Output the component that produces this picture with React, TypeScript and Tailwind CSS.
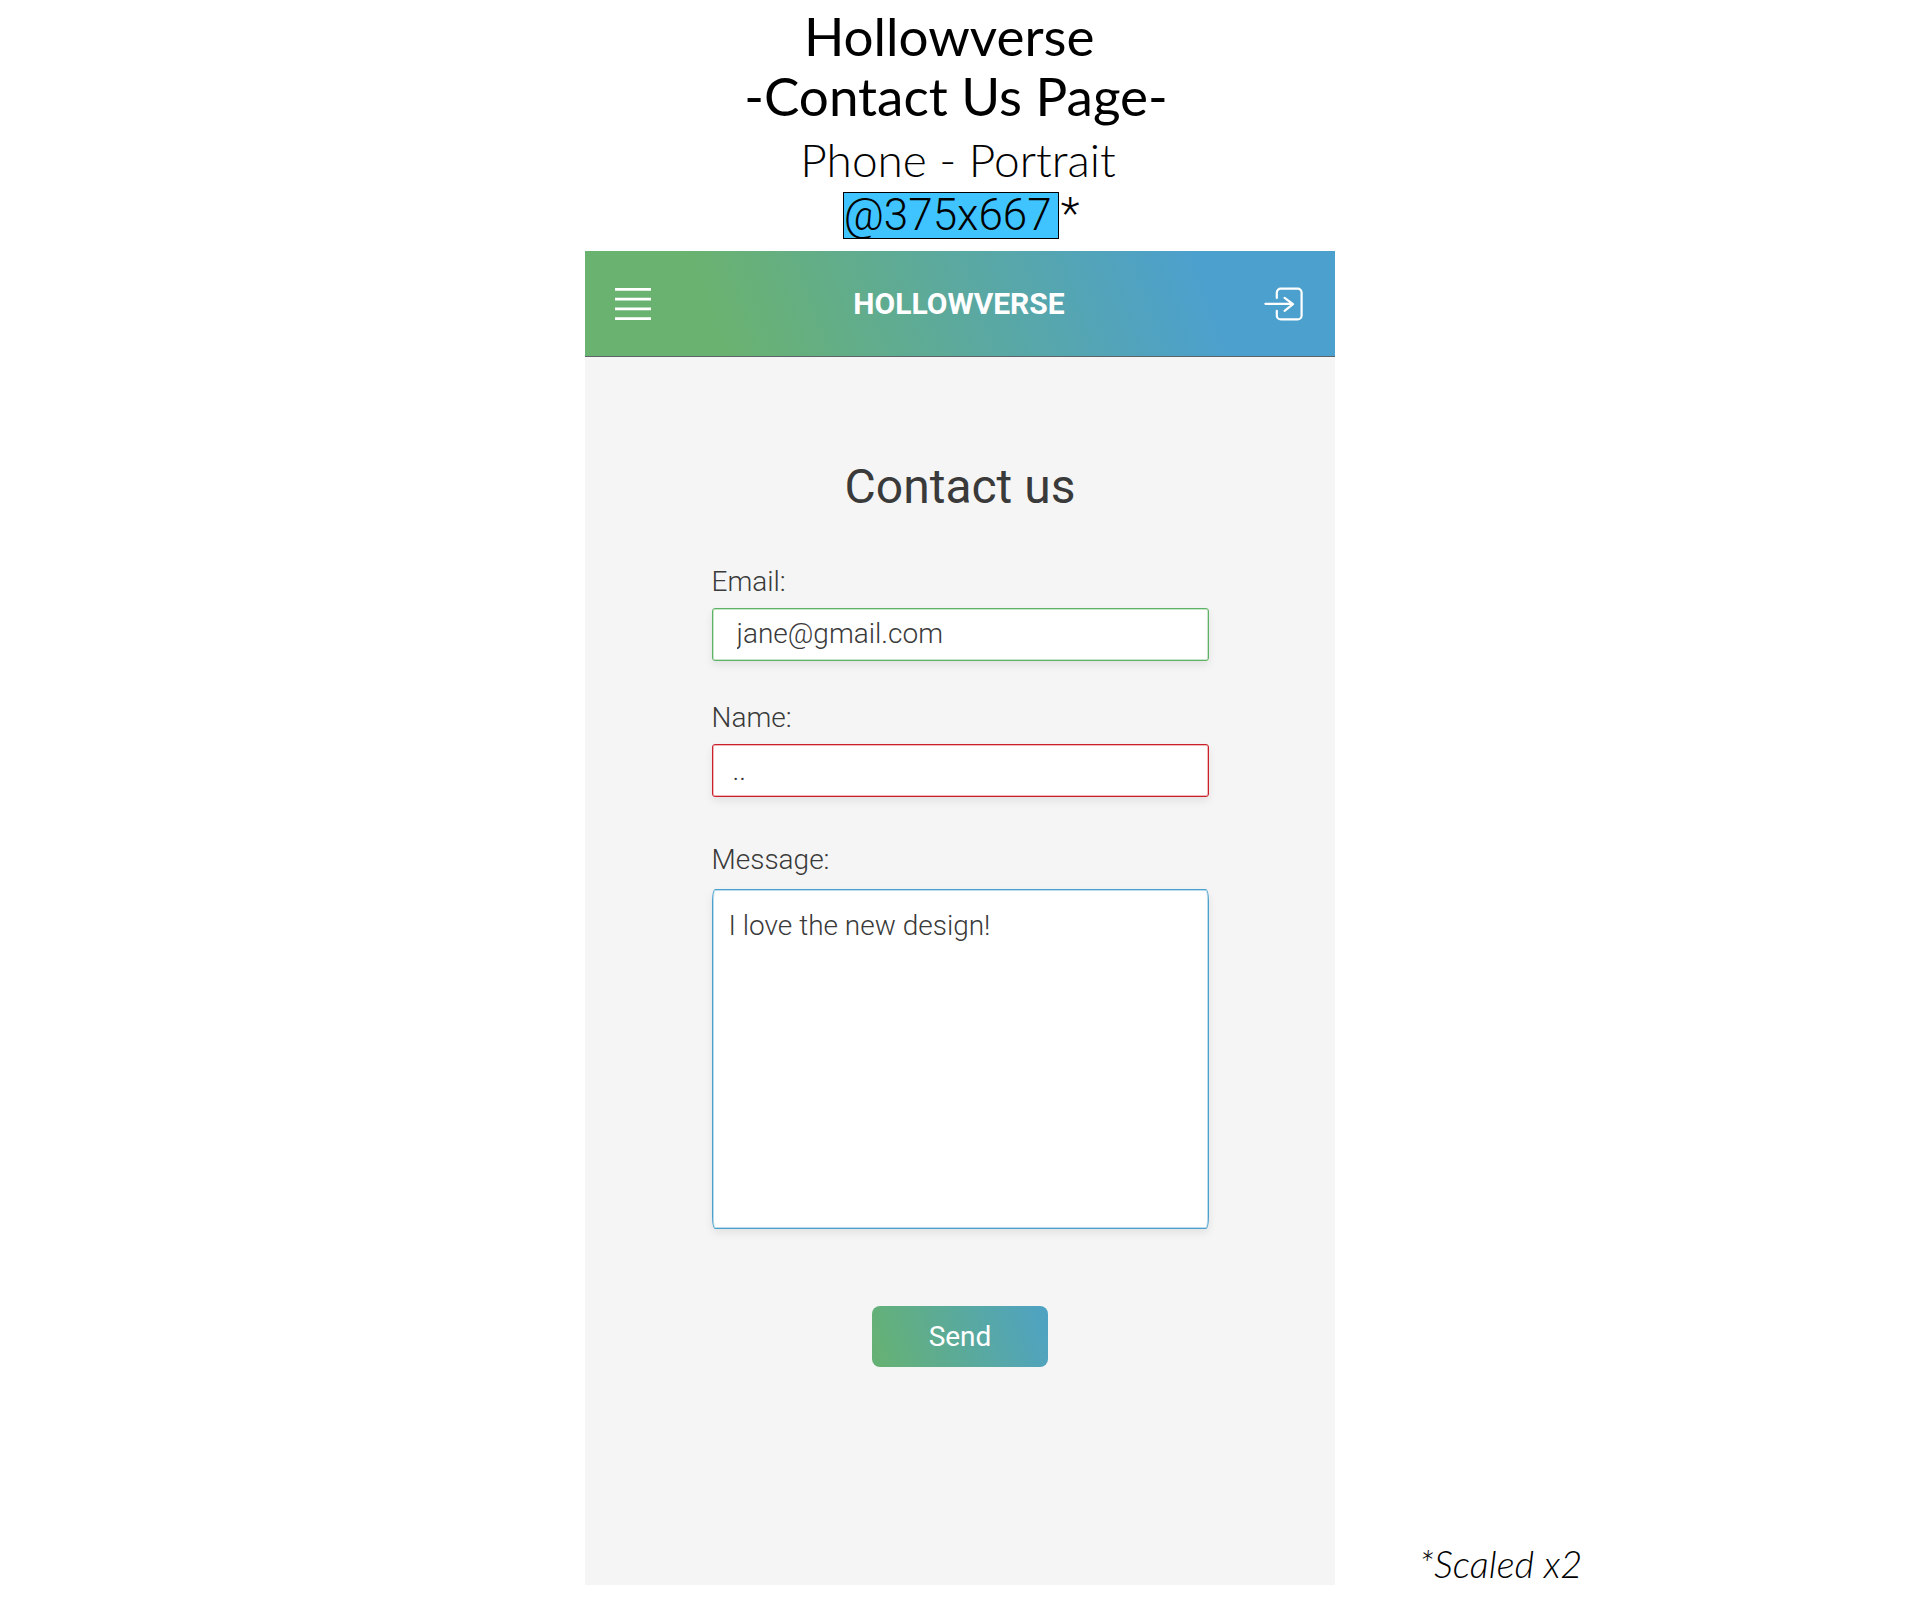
import type { ReactNode } from "react";

function MenuIcon() {
  return (
    <svg width="36" height="32" viewBox="0 0 36 32" stroke="currentColor" strokeWidth="2.6" aria-hidden="true">
      <path d="M0 1.4h36M0 11.1h36M0 20.9h36M0 30.6h36" />
    </svg>
  );
}

function LoginIcon() {
  return (
    <svg
      width="40"
      height="34"
      viewBox="1 0 40 34"
      fill="none"
      stroke="currentColor"
      strokeWidth="2.2"
      strokeLinecap="round"
      strokeLinejoin="round"
      className="overflow-visible"
      aria-hidden="true"
    >
      <path d="M12.8 11V5.6a4 4 0 0 1 4-4h16.8a4 4 0 0 1 4 4v22.8a4 4 0 0 1-4 4H16.8a4 4 0 0 1-4-4v-4.6" />
      <path d="M1.4 16.8h27M20.6 10.8l8.4 6.4-8.4 6.6" />
    </svg>
  );
}

function Field({ id, label, children }: { id: string; label: string; children: ReactNode }) {
  return (
    <div className="flex flex-col gap-[10px]">
      <label htmlFor={id} className="text-[28px] leading-8 font-light">
        {label}
      </label>
      {children}
    </div>
  );
}

export default function App() {
  return (
    <div className="min-h-screen bg-white pt-[6px] font-['Roboto',sans-serif] text-[#3a3a3a]">
      <div className="text-center font-['Lato',sans-serif] text-black">
        <h1 className="pr-2 text-[53px] leading-[60px] whitespace-pre-wrap">
          {"Hollowverse \n-Contact Us Page-"}
        </h1>
        <p className="mt-2 pr-1 text-[46px] leading-[52px] font-light">Phone - Portrait</p>
        <p className="mt-[6px] flex justify-center pl-[2px] font-['Roboto',sans-serif] text-[44px] leading-[45px] font-light">
          <span className="border border-black bg-[#40c4ff] pr-[6px]">@375x667</span>
          <span className="pl-[2px]">*</span>
        </p>
      </div>

      <div className="mt-3 grid grid-cols-[1fr_minmax(0,750px)_1fr]">
        <main className="col-start-2 bg-[#f5f5f5] pb-[218px]">
          <header className="flex h-[106px] items-center justify-between border-b border-[#5f6468] bg-[linear-gradient(71deg,#6ab270_18%,#4ca0cd_82%)] px-[30px] text-white">
            <button type="button" aria-label="Menu" className="pr-[2px]">
              <MenuIcon />
            </button>
            <span className="text-[30px] leading-9 font-bold">HOLLOWVERSE</span>
            <button type="button" aria-label="Log in">
              <LoginIcon />
            </button>
          </header>

          <form className="mx-auto flex max-w-[497px] flex-col pt-[102px]">
            <h2 className="text-center text-[48px] leading-[56px]">Contact us</h2>
            <div className="mt-[51px] flex flex-col gap-[41px]">
              <Field id="email" label="Email:">
                <input
                  id="email"
                  type="email"
                  defaultValue="jane@gmail.com"
                  className="h-[53px] w-full rounded-[3px] border border-[#5db365] bg-white px-6 pb-[2px] text-[28px] font-light shadow-[inset_0_0_0_1px_#c8e5ca,0_4px_8px_rgba(0,0,0,0.08)] outline-none"
                />
              </Field>
              <Field id="name" label="Name:">
                <input
                  id="name"
                  type="text"
                  defaultValue=".."
                  className="h-[53px] w-full rounded-[3px] border border-[#c9202a] bg-white px-5 text-[28px] font-light shadow-[inset_0_0_0_1px_#f0b6b8,0_4px_8px_rgba(0,0,0,0.08)] outline-none"
                />
              </Field>
              <div className="mt-[6px]">
                <Field id="message" label="Message:">
                  <textarea
                    id="message"
                    defaultValue="I love the new design!"
                    className="mt-[3px] h-[340px] w-full resize-none rounded-[3px/12px] border border-[#4ca0cd] bg-white px-4 py-5 text-[28px] leading-8 font-light shadow-[inset_0_0_0_1px_#bcdcec,0_4px_8px_rgba(0,0,0,0.08)] outline-none"
                  />
                </Field>
              </div>
            </div>
            <button
              type="submit"
              className="mx-auto mt-[77px] h-[61px] w-44 rounded-lg bg-[linear-gradient(71deg,#65b175_5%,#4ea2c4_100%)] text-[28px] leading-8 text-white"
            >
              Send
            </button>
          </form>
        </main>
        <p className="self-end pl-[84px] font-['Lato',sans-serif] text-[38px] leading-[44px] font-light text-black italic">
          *Scaled x2
        </p>
      </div>
    </div>
  );
}
